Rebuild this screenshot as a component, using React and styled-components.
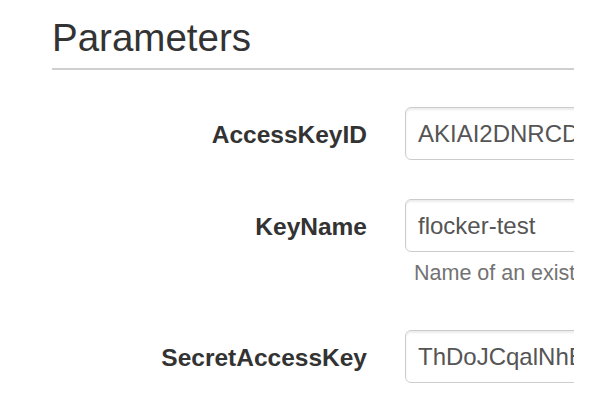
import styled, { createGlobalStyle } from "styled-components";

const GlobalStyle = createGlobalStyle`
  body {
    margin: 0;
    background: #ffffff;
    font-family: "Liberation Sans", Arial, sans-serif;
    color: #333333;
  }
`;

const params = [
  { name: "AccessKeyID", value: "AKIAI2DNRCDXQ7EXAMPLE" },
  {
    name: "KeyName",
    value: "flocker-test",
    help: "Name of an existing EC2 KeyPair to enable SSH access",
  },
  { name: "SecretAccessKey", value: "ThDoJCqalNhEXAMPLEKEY" },
];

const App = () => {
  return (
    <>
      <GlobalStyle />
      <Page>
        <Panel>
          <Title>Parameters</Title>
          <Form>
            {params.map((p) => (
              <FormGroup key={p.name}>
                <Label htmlFor={p.name}>{p.name}</Label>
                <Field>
                  <Input id={p.name} defaultValue={p.value} readOnly />
                  {p.help && <HelpText>{p.help}</HelpText>}
                </Field>
              </FormGroup>
            ))}
          </Form>
        </Panel>
      </Page>
    </>
  );
};

const Page = styled.div`
  width: 608px;
  height: 420px;
  padding: 17px 0 0 52px;
  box-sizing: border-box;
  overflow: hidden;
`;

const Panel = styled.div`
  width: 522px;
  overflow: hidden;
`;

const Title = styled.h1`
  margin: 0;
  padding-bottom: 9px;
  border-bottom: 2px solid #cfcfcf;
  font-size: 38.5px;
  font-weight: 400;
  line-height: 1.1;
  color: #333333;
`;

const Form = styled.div`
  padding-top: 37px;
`;

const FormGroup = styled.div`
  display: grid;
  grid-template-columns: 315px 1fr;
  column-gap: 38px;
  margin-bottom: 39px;
`;

const Label = styled.label`
  height: 53px;
  display: flex;
  align-items: center;
  justify-content: flex-end;
  padding-top: 2px;
  box-sizing: border-box;
  font-size: 24.5px;
  font-weight: 700;
  color: #333333;
`;

const Field = styled.div`
  min-width: 0;
  overflow: hidden;
`;

const Input = styled.input`
  display: block;
  width: 420px;
  height: 53px;
  box-sizing: border-box;
  padding: 0 12px;
  border: 1px solid #cccccc;
  border-radius: 6px;
  background: #ffffff;
  box-shadow: inset 0 2px 2px rgba(0, 0, 0, 0.075);
  font-family: "Liberation Sans", Arial, sans-serif;
  font-size: 24px;
  color: #555555;
  outline: none;
`;

const HelpText = styled.div`
  margin: 9px 0 5px;
  padding-left: 9px;
  font-size: 21.5px;
  line-height: 25px;
  color: #737373;
  white-space: nowrap;
  overflow: hidden;
`;

export default App;
